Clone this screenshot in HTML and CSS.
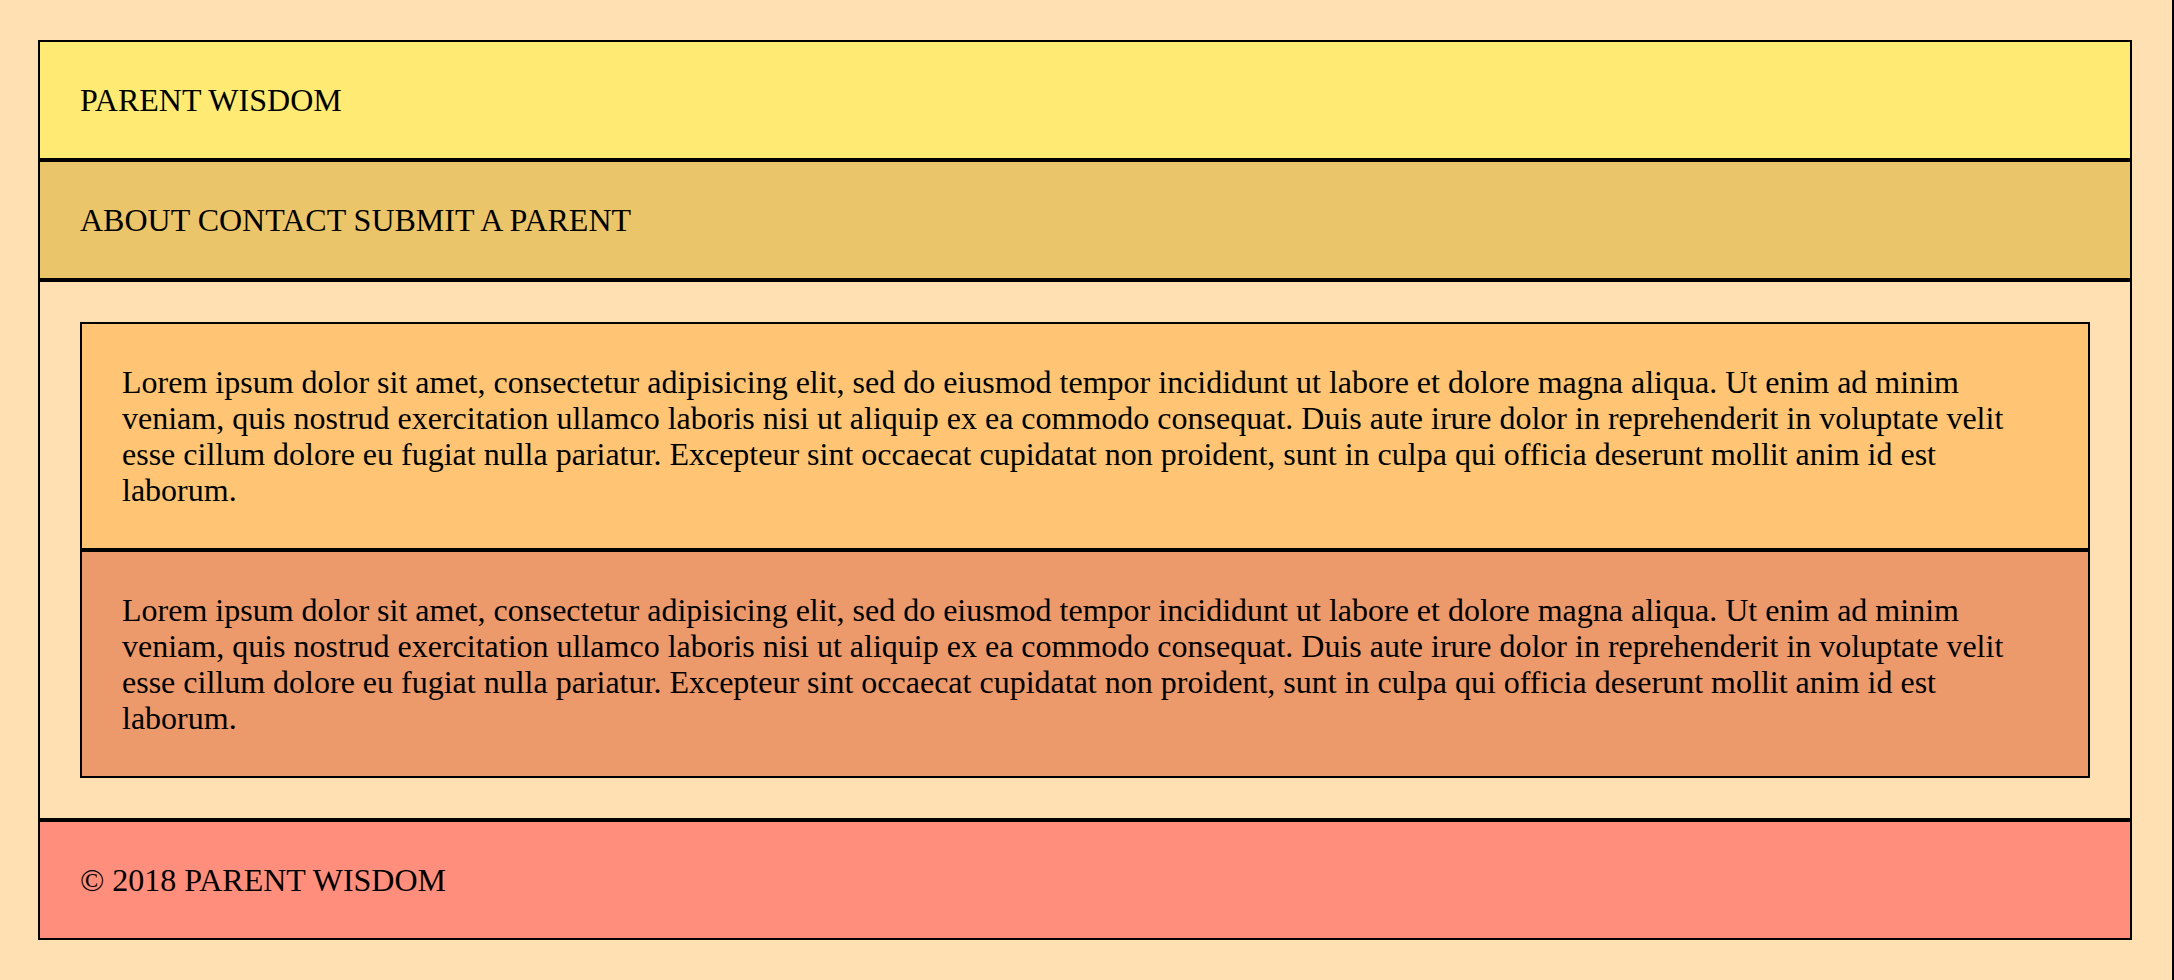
FILE: index.html
```html
<!DOCTYPE html>
<html lang="en">
<head>
<meta charset="utf-8">
<title>Parent Wisdom</title>
<link rel="stylesheet" href="styles.css">
</head>
<body>
<div class="page">
  <div class="frame">
    <header class="site-header">PARENT WISDOM</header>
    <nav class="site-nav">ABOUT CONTACT SUBMIT A PARENT</nav>
    <main class="site-main">
      <article class="entry entry-a">
        <p>Lorem ipsum dolor sit amet, consectetur adipisicing elit, sed do eiusmod tempor incididunt ut labore et dolore magna aliqua. Ut enim ad minim veniam, quis nostrud exercitation ullamco laboris nisi ut aliquip ex ea commodo consequat. Duis aute irure dolor in reprehenderit in voluptate velit esse cillum dolore eu fugiat nulla pariatur. Excepteur sint occaecat cupidatat non proident, sunt in culpa qui officia deserunt mollit anim id est laborum.</p>
      </article>
      <article class="entry entry-b">
        <p>Lorem ipsum dolor sit amet, consectetur adipisicing elit, sed do eiusmod tempor incididunt ut labore et dolore magna aliqua. Ut enim ad minim veniam, quis nostrud exercitation ullamco laboris nisi ut aliquip ex ea commodo consequat. Duis aute irure dolor in reprehenderit in voluptate velit esse cillum dolore eu fugiat nulla pariatur. Excepteur sint occaecat cupidatat non proident, sunt in culpa qui officia deserunt mollit anim id est laborum.</p>
      </article>
    </main>
    <footer class="site-footer">&copy; 2018 PARENT WISDOM</footer>
  </div>
</div>
</body>
</html>
```

FILE: styles.css
```css
html {
  background: #ffe0b2;
}
body {
  margin: 0;
  min-height: 100vh;
  box-sizing: border-box;
  border-right: 2px solid #000;
  font-family: "Liberation Serif", "Times New Roman", serif;
  font-size: 32px;
  line-height: 36px;
  color: #000;
}
.page {
  padding: 40px 40px 40px 38px;
}
.frame {
  display: flex;
  flex-direction: column;
}
.site-header,
.site-nav,
.site-main,
.site-footer {
  border: 2px solid #000;
  padding: 40px;
}
.site-header {
  background: #ffeb73;
}
.site-nav {
  background: #ebc56a;
}
.site-main {
  background: #ffe0b2;
  display: flex;
  flex-direction: column;
}
.site-footer {
  background: #ff8f7c;
}
.entry {
  border: 2px solid #000;
  padding: 40px;
}
.entry p {
  margin: 0;
}
.entry-a {
  background: #ffc574;
}
.entry-b {
  background: #ec996b;
}
```
